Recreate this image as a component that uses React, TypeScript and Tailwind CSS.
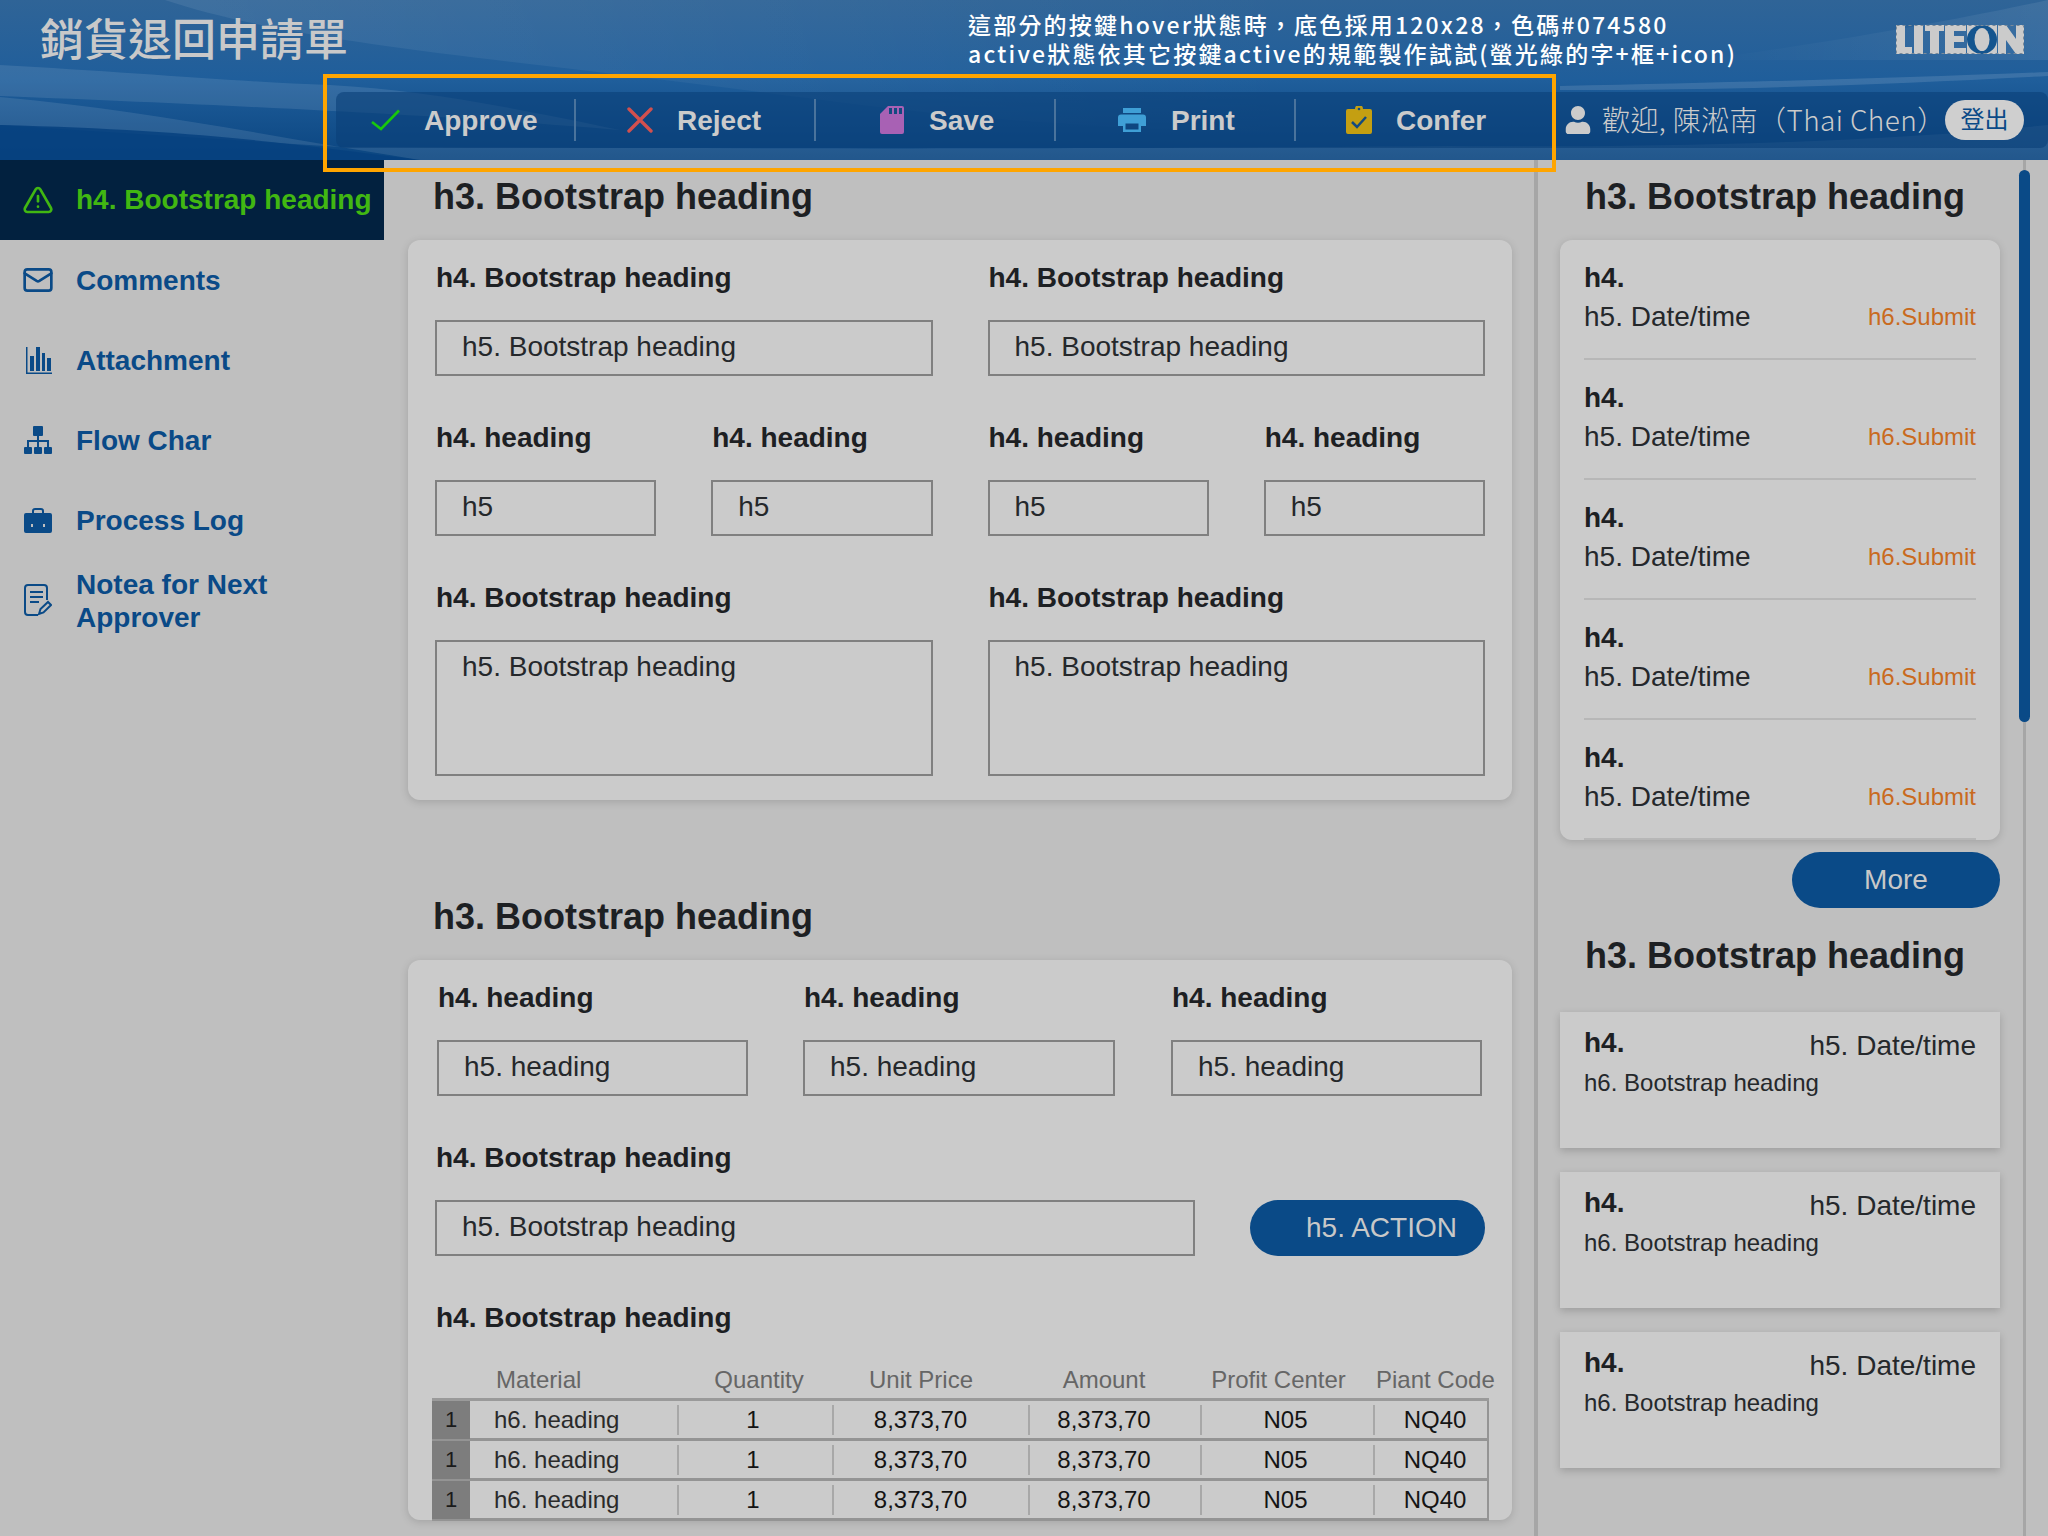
import { TriangleAlert, Mail } from "lucide-react";
import { FaUser } from "react-icons/fa";

function CheckIcon() {
  return (
    <svg width="30" height="22" viewBox="0 0 30 22" fill="none" stroke="#18c80c" strokeWidth="2.600">
      <path d="M1 13l9 7L28 1.500" />
    </svg>
  );
}

function CrossIcon() {
  return (
    <svg width="26" height="26" viewBox="0 0 26 26" fill="none" stroke="#d2504e" strokeWidth="3.400" strokeLinecap="round">
      <path d="M2 2l22 22M24 2L2 24" />
    </svg>
  );
}

function SdIcon() {
  return (
    <svg width="24" height="28" viewBox="0 0 24 28">
      <path d="M8 0h14a2 2 0 0 1 2 2v24a2 2 0 0 1-2 2H2a2 2 0 0 1-2-2V8z" fill="#a861b4" />
      <path d="M9 2h3v6H9zM14 2h3v6h-3zM19 2h3v6h-3z" fill="#134a80" />
    </svg>
  );
}

function AttachIcon() {
  return (
    <svg width="28" height="28" viewBox="0 0 28 28" fill="#0a4a87">
      <rect x="2" y="1" width="1.500" height="27" />
      <rect x="2" y="26.500" width="26" height="1.500" />
      <rect x="6" y="10" width="4" height="15" />
      <rect x="12" y="1" width="4" height="24" />
      <rect x="18" y="7" width="3" height="18" />
      <rect x="23" y="12" width="4" height="13" />
    </svg>
  );
}

function TreeIcon() {
  return (
    <svg width="28" height="28" viewBox="0 0 28 28" fill="#0a4a87">
      <rect x="9" y="0" width="10" height="10" rx="1" />
      <rect x="0" y="21" width="8" height="7" rx="1" />
      <rect x="10" y="21" width="8" height="7" rx="1" />
      <rect x="20" y="21" width="8" height="7" rx="1" />
      <path d="M13 10h2v4h10v7h-2v-5h-8v5h-2v-5H5v5H3v-7h10z" />
    </svg>
  );
}

function CaseIcon() {
  return (
    <svg width="28" height="26" viewBox="0 0 28 26" fill="#0a4a87">
      <path d="M8 7V4a3 3 0 0 1 3-3h6a3 3 0 0 1 3 3v3h-2V4a1 1 0 0 0-1-1h-6a1 1 0 0 0-1 1v3z" />
      <path fillRule="evenodd" d="M2 6h24a2 2 0 0 1 2 2v16a2 2 0 0 1-2 2H2a2 2 0 0 1-2-2V8a2 2 0 0 1 2-2zM7 17v3h2v-3zM19 17v3h2v-3z" />
    </svg>
  );
}

function NoteIcon() {
  return (
    <svg width="28" height="32" viewBox="0 0 28 32" fill="none" stroke="#0a4a87" strokeWidth="2">
      <path d="M14 31H4a3 3 0 0 1-3-3V4a3 3 0 0 1 3-3h16a3 3 0 0 1 3 3v12" />
      <path d="M6 8h13M6 13h13M6 18h9" />
      <path d="M15 30l1.500-5L24 18l3 3-7.500 7.500z" />
    </svg>
  );
}

function PrintIcon() {
  return (
    <svg width="28" height="24" viewBox="0 0 28 24" fill="#3f9fd6">
      <rect x="5" y="0" width="18" height="5" />
      <path d="M3 6.500h22a3 3 0 0 1 3 3V18h-5v-5H5v5H0V9.500a3 3 0 0 1 3-3z" />
      <path d="M5 13h18v11H5zM7.500 15.500v6h13v-6z" fillRule="evenodd" />
    </svg>
  );
}

function ConferIcon() {
  return (
    <svg width="26" height="28" viewBox="0 0 26 28">
      <path d="M2 3h7a4 4 0 0 1 8 0h7a2 2 0 0 1 2 2v21a2 2 0 0 1-2 2H2a2 2 0 0 1-2-2V5a2 2 0 0 1 2-2z" fill="#c49f12" />
      <circle cx="13" cy="3" r="1.300" fill="#124a80" />
      <path d="M6 16l5 5 9-10" fill="none" stroke="#124a80" strokeWidth="2.500" />
    </svg>
  );
}

function Logo() {
  return (
    <svg width="128" height="29" viewBox="0 0 128 29" fill="#cbcbcb">
      <path d="M0 0h9v22h7v7H0z" />
      <rect x="18" width="9" height="29" />
      <path d="M29 0h19v6h-5v23h-9V6h-5z" />
      <path d="M49 0h21v6H58v5h10v6H58v6h12v6H49z" />
      <rect x="71" width="30" height="29" />
      <ellipse cx="86" cy="14.500" rx="15" ry="14.500" fill="#14558f" />
      <ellipse cx="86" cy="14.500" rx="7.500" ry="11.500" />
      <path d="M102 0h8l10 14V0h8v29h-8l-10-14v14h-8z" />
      <rect x="0.500" y="0.500" width="127" height="28" fill="none" stroke="#7b8a99" strokeDasharray="3 3" />
    </svg>
  );
}

const toolbar = [
  { label: "Approve", icon: <CheckIcon />, pl: "pl-[35px]", gap: "gap-[23px]" },
  { label: "Reject", icon: <CrossIcon />, pl: "pl-[51px]", gap: "gap-[24px]" },
  { label: "Save", icon: <SdIcon />, pl: "pl-[64px]", gap: "gap-[25px]" },
  { label: "Print", icon: <PrintIcon />, pl: "pl-[62px]", gap: "gap-[25px]" },
  { label: "Confer", icon: <ConferIcon />, pl: "pl-[50px]", gap: "gap-[24px]" },
];

const sideItems = [
  { label: "Comments", icon: <Mail size={32} color="#0a4a87" strokeWidth={2} className="-ml-[2px]" /> },
  { label: "Attachment", icon: <AttachIcon /> },
  { label: "Flow Char", icon: <TreeIcon /> },
  { label: "Process Log", icon: <CaseIcon /> },
  { label: "Notea for Next Approver", icon: <NoteIcon />, nudge: "translate-y-[1px]" },
];

function Field({ label, value, tall }: { label: string; value: string; tall?: boolean }) {
  return (
    <div>
      <div className="h-[64px] pl-[1px] text-[28px] leading-[44px] font-bold text-[#1d2023] whitespace-nowrap">{label}</div>
      <div className={`border-2 border-[#808080] pl-[25px] text-[28px] text-[#25282b] whitespace-nowrap ${tall ? "h-[136px] leading-[50px]" : "h-[56px] leading-[50px]"}`}>
        {value}
      </div>
    </div>
  );
}

const colClass = ["pl-[24px] text-left", "pr-[5px] text-center", "pr-[21px] text-center", "pr-[22px] text-center", "pr-[4px] text-center", "pl-[6px] text-center"];
const headClass = ["pl-[26px] text-left", "pl-[5px] text-center", "pr-[22px] text-center", "pr-[24px] text-center", "pr-[20px] text-center", "pl-[1px] text-center"];
const headers = ["Material", "Quantity", "Unit Price", "Amount", "Profit Center", "Piant Code"];
const cells = ["h6. heading", "1", "8,373,70", "8,373,70", "N05", "NQ40"];

function Table() {
  return (
    <div className="-ml-[3px] w-[1057px] text-[24px]">
      <div className="grid h-[41px] grid-cols-[38px_209px_155px_196px_172px_173px_114px] items-center border-b-[3px] border-[#9a9a9a] pt-[2px] text-[#666666]">
        <div />
        {headers.map((h, i) => (
          <div key={h} className={`whitespace-nowrap ${headClass[i]}`}>{h}</div>
        ))}
      </div>
      {[0, 1, 2].map((r) => (
        <div key={r} className="grid h-[40px] grid-cols-[38px_209px_155px_196px_172px_173px_114px] items-center border-r-2 border-b-[3px] border-[#949494] text-[#141414]">
          <div className="h-full bg-[#7d7d7d] text-center text-[22px] leading-[38px] text-[#1a1a1a]">1</div>
          {cells.map((c, i) => (
            <div key={i} className={`h-[30px] leading-[30px] whitespace-nowrap ${i < 5 ? "border-r-2 border-[#a8a8a8]" : ""} ${colClass[i]} ${i === 0 ? "text-[#2a2a2a]" : ""}`}>
              {c}
            </div>
          ))}
        </div>
      ))}
    </div>
  );
}

export default function App() {
  return (
    <div className="relative flex h-[1536px] w-[2048px] flex-col overflow-hidden bg-[#bfbfbf] font-['Liberation_Sans','Noto_Sans_CJK_TC',sans-serif]">
      {/* Header */}
      <header className="relative h-[160px] shrink-0 overflow-hidden bg-gradient-to-b from-[#2f6497] via-[#1f5e9b] to-[#0a4580]">
        <svg className="absolute inset-0" width="2048" height="160" viewBox="0 0 2048 160" fill="#ffffff">
          <defs>
            <linearGradient id="topWave" x1="165" y1="0" x2="1300" y2="0" gradientUnits="userSpaceOnUse">
              <stop offset="0" stopColor="#ffffff" stopOpacity="0.08" />
              <stop offset="1" stopColor="#ffffff" stopOpacity="0" />
            </linearGradient>
            <linearGradient id="cornerWave" x1="2048" y1="0" x2="1700" y2="0" gradientUnits="userSpaceOnUse">
              <stop offset="0" stopColor="#ffffff" stopOpacity="0.08" />
              <stop offset="1" stopColor="#ffffff" stopOpacity="0" />
            </linearGradient>
          </defs>
          <path d="M165 0C300 45 520 60 760 92C900 110 1000 125 1300 135V0Z" fill="url(#topWave)" />
          <path d="M0 65C130 72 240 82 330 85C420 90 500 105 620 130C480 118 300 108 0 96Z" opacity="0.1" />
          <path d="M0 97C120 108 230 128 340 147L0 125Z" opacity="0.1" />
          <path d="M0 125C200 130 300 145 420 160H0Z" fill="#06417f" opacity="0.85" />
          <path d="M340 147C700 148 1000 150 1450 146C1700 148 1900 140 2048 125V160H420Z" opacity="0.1" />
          <path d="M1560 86C1750 82 1900 78 2048 72V76C1900 84 1750 90 1560 90Z" opacity="0.12" />
          <path d="M1700 60C1850 40 1980 15 2048 0V60Z" fill="url(#cornerWave)" />
        </svg>
        <div className="relative flex h-[92px] items-start justify-between pr-[24px] pl-[40px]">
          <div className="mt-[15px] text-[44px] leading-[52px] font-medium text-[#c9c9c9]">銷貨退回申請單</div>
          <div className="absolute top-[10px] left-[968px] font-['Noto_Sans_CJK_TC',sans-serif] text-[23px] leading-[29px] font-medium tracking-[2.2px] whitespace-nowrap text-white">
            <div>這部分的按鍵hover狀態時，底色採用120x28，色碼#074580</div>
            <div>active狀態依其它按鍵active的規範製作試試(螢光綠的字+框+icon)</div>
          </div>
          <div className="mt-[25px]"><Logo /></div>
        </div>
        <div className="relative ml-[336px] flex h-[56px] items-center rounded-[8px] bg-[#0a3f78]/60">
          {toolbar.map((t, i) => (
            <div key={t.label} className={`flex h-[42px] w-[240px] items-center ${t.pl} ${t.gap} ${i < 4 ? "border-r-2 border-[#4a739c]" : ""} text-[28px] font-bold text-[#cbcbcb]`}>
              {t.icon}
              <span className="translate-y-[1px]">{t.label}</span>
            </div>
          ))}
          <div className="ml-[28px] flex items-center text-[#cbcbcb]">
            <FaUser size={28} />
            <span className="ml-[10px] w-[343px] -translate-y-[1px] font-['Noto_Sans_CJK_TC',sans-serif] text-[28px] font-light tracking-[0.4px] whitespace-nowrap">歡迎, 陳淞南（Thai Chen）</span>
            <span className="flex h-[40px] w-[79px] items-center justify-center rounded-full bg-[#cfcfcf] text-[24px] text-[#0a4a87]">登出</span>
          </div>
        </div>
      </header>

      <div className="flex min-h-0 flex-1">
        {/* Sidebar */}
        <aside className="w-[384px] shrink-0 text-[28px] font-bold text-[#0a4a87]">
          <div className="flex h-[80px] items-center gap-[22px] bg-[#02213f] pl-[22px] text-[#41b712]">
            <TriangleAlert size={32} strokeWidth={2} />
            <span className="whitespace-nowrap">h4. Bootstrap heading</span>
          </div>
          {sideItems.map((s) => (
            <div key={s.label} className="flex h-[80px] items-center pl-[24px]">
              <div className="flex w-[52px] shrink-0 items-center">{s.icon}</div>
              <span className={`w-[230px] leading-[33px] ${s.nudge ?? ""}`}>{s.label}</span>
            </div>
          ))}
        </aside>

        {/* Main */}
        <main className="w-[1154px] shrink-0 border-r-4 border-[#a6a6a6] pl-[24px]">
          <h3 className="h-[80px] pl-[25px] text-[36px] leading-[74px] font-bold text-[#1d2023]">h3. Bootstrap heading</h3>
          <section className="h-[560px] w-[1104px] rounded-[12px] bg-[#cbcbcb] px-[27px] pt-[16px] shadow-[0_2px_8px_rgba(0,0,0,0.15)]">
            <div className="grid grid-cols-2 gap-x-[55px] gap-y-[40px]">
              <Field label="h4. Bootstrap heading" value="h5. Bootstrap heading" />
              <Field label="h4. Bootstrap heading" value="h5. Bootstrap heading" />
              <div className="grid grid-cols-2 gap-x-[55px]">
                <Field label="h4. heading" value="h5" />
                <Field label="h4. heading" value="h5" />
              </div>
              <div className="grid grid-cols-2 gap-x-[55px]">
                <Field label="h4. heading" value="h5" />
                <Field label="h4. heading" value="h5" />
              </div>
              <Field label="h4. Bootstrap heading" value="h5. Bootstrap heading" tall />
              <Field label="h4. Bootstrap heading" value="h5. Bootstrap heading" tall />
            </div>
          </section>

          <h3 className="mt-[80px] h-[80px] pl-[25px] text-[36px] leading-[74px] font-bold text-[#1d2023]">h3. Bootstrap heading</h3>
          <section className="h-[560px] w-[1104px] rounded-[12px] bg-[#cbcbcb] px-[27px] pt-[16px] shadow-[0_2px_8px_rgba(0,0,0,0.15)]">
            <div className="grid grid-cols-[311px_311px_311px] gap-x-[56px] pl-[2px]">
              <Field label="h4. heading" value="h5. heading" />
              <div className="-ml-[1px]">
                <Field label="h4. heading" value="h5. heading" />
              </div>
              <Field label="h4. heading" value="h5. heading" />
            </div>
            <div className="mt-[40px] flex items-end justify-between">
              <div className="w-[760px]">
                <Field label="h4. Bootstrap heading" value="h5. Bootstrap heading" />
              </div>
              <button className="h-[56px] w-[235px] rounded-full bg-[#0a4a87] pl-[28px] text-[28px] text-[#c8c8c8]">h5. ACTION</button>
            </div>
            <div className="mt-[40px] h-[64px] pl-[1px] text-[28px] leading-[44px] font-bold text-[#1d2023]">h4. Bootstrap heading</div>
            <Table />
          </section>
        </main>

        {/* Right panel */}
        <aside className="relative flex-1 pl-[22px]">
          <h3 className="h-[80px] pl-[25px] text-[36px] leading-[74px] font-bold text-[#1d2023]">h3. Bootstrap heading</h3>
          <section className="h-[600px] w-[440px] rounded-[12px] bg-[#cbcbcb] px-[24px] shadow-[0_2px_8px_rgba(0,0,0,0.15)]">
            {[0, 1, 2, 3, 4].map((i) => (
              <div key={i} className="h-[120px] border-b-2 border-[#b7b7b7] pt-[18px]">
                <div className="text-[28px] leading-[40px] font-bold text-[#1d2023]">h4.</div>
                <div className="flex items-center justify-between text-[28px] leading-[38px] text-[#25282b]">
                  <span>h5. Date/time</span>
                  <span className="text-[24px] text-[#c96a1e]">h6.Submit</span>
                </div>
              </div>
            ))}
          </section>
          <div className="mt-[12px] flex w-[440px] justify-end">
            <button className="h-[56px] w-[208px] rounded-full bg-[#0a4a87] text-[28px] text-[#c8c8c8]">More</button>
          </div>
          <h3 className="h-[104px] pt-[12px] pl-[25px] text-[36px] leading-[72px] font-bold text-[#1d2023]">h3. Bootstrap heading</h3>
          <div className="flex w-[440px] flex-col gap-[24px]">
            {[0, 1, 2].map((i) => (
              <div key={i} className="h-[136px] bg-[#cbcbcb] px-[24px] pt-[12px] shadow-[0_3px_8px_rgba(0,0,0,0.18)]">
                <div className="flex justify-between text-[28px] leading-[38px] text-[#25282b]">
                  <span className="font-bold text-[#1d2023]">h4.</span>
                  <span className="translate-y-[3px]">h5. Date/time</span>
                </div>
                <div className="mt-[3px] text-[24px] leading-[36px] text-[#25282b]">h6. Bootstrap heading</div>
              </div>
            ))}
          </div>
          <div className="absolute top-0 bottom-0 left-[485px] w-[3px] bg-[#a6a6a6]" />
          <div className="absolute top-[10px] left-[481px] h-[552px] w-[11px] rounded-full bg-[#0a4a87]" />
        </aside>
      </div>

      {/* Annotation frame */}
      <div className="absolute top-[74px] left-[323px] h-[98px] w-[1233px] border-4 border-[#ffa500]" />
    </div>
  );
}
